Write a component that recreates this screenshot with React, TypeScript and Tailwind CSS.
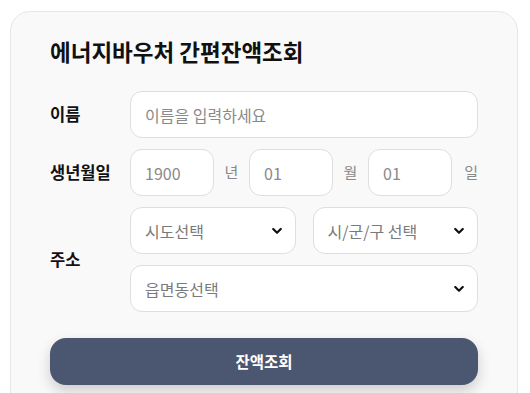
import type { ReactNode } from 'react';

const font = { fontFamily: '"Noto Sans CJK KR", "Noto Sans", sans-serif' };

function Chevron() {
  return (
    <svg
      aria-hidden="true"
      viewBox="0 0 12 8"
      className="pointer-events-none absolute right-[14px] top-1/2 h-[7px] w-[10px] -translate-y-1/2"
    >
      <path d="M1.5 1.5 6 6l4.5-4.5" fill="none" stroke="#111" strokeWidth="2.6" strokeLinecap="round" strokeLinejoin="round" />
    </svg>
  );
}

function Select({ label, className = '' }: { label: string; className?: string }) {
  return (
    <div className={`relative ${className}`}>
      <select
        className="h-[47px] w-full appearance-none rounded-[12px] border border-[#dedede] bg-white pl-[14px] pr-9 text-[16px] text-[#7a7a7a] outline-none"
        defaultValue=""
      >
        <option value="">{label}</option>
      </select>
      <Chevron />
    </div>
  );
}

function Row({ label, children }: { label: string; children: ReactNode }) {
  return (
    <div className="flex items-center">
      <span className="w-[80px] shrink-0 text-[16.5px] font-bold text-[#111]">{label}</span>
      <div className="min-w-0 flex-1">{children}</div>
    </div>
  );
}

const inputCls =
  'h-[47px] w-full rounded-[12px] border border-[#dedede] bg-white px-[14px] text-[16px] text-[#333] outline-none placeholder:text-[#8a8a8a]';

export default function App() {
  return (
    <div className="min-h-screen bg-white pl-[10px] pt-[11px]" style={font}>
      <div className="w-[508px] rounded-[20px] border border-[#e6e6e6] bg-[#f9f9f9] pb-10 pl-[39px] pr-[39px] pt-[24px]">
        <h2 className="text-[22.5px] font-bold leading-[30px] text-[#111]">에너지바우처 간편잔액조회</h2>

        <div className="mt-[25px] flex flex-col gap-[11px]">
          <Row label="이름">
            <input className={inputCls} placeholder="이름을 입력하세요" />
          </Row>

          <Row label="생년월일">
            <div className="flex items-center">
              <input className={`${inputCls} !w-[84px]`} placeholder="1900" />
              <span className="w-[35px] text-center text-[15px] text-[#888]">년</span>
              <input className={`${inputCls} !w-[84px]`} placeholder="01" />
              <span className="w-[35px] text-center text-[15px] text-[#888]">월</span>
              <input className={`${inputCls} !w-[84px]`} placeholder="01" />
              <span className="flex-1 text-right text-[15px] text-[#888]">일</span>
            </div>
          </Row>

          <Row label="주소">
            <div className="flex flex-col gap-[11px]">
              <div className="flex gap-[17px]">
                <Select label="시도선택" className="flex-1" />
                <Select label="시/군/구 선택" className="flex-1" />
              </div>
              <Select label="읍면동선택" />
            </div>
          </Row>
        </div>

        <button
          type="button"
          className="mt-[26px] h-[47px] w-full rounded-[16px] bg-[#4b5670] text-[15.5px] font-bold text-white shadow-[0_6px_14px_rgba(0,0,0,0.18)]"
        >
          잔액조회
        </button>
      </div>
    </div>
  );
}
